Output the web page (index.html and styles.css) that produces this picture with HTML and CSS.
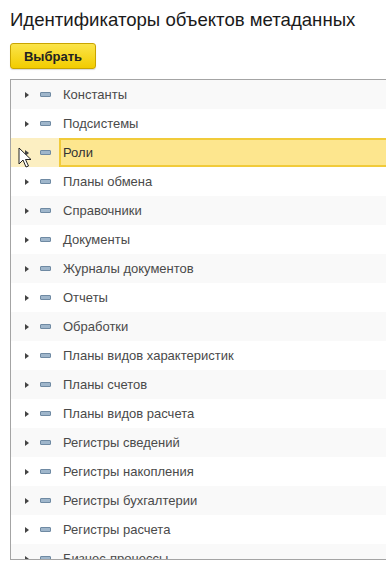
FILE: index.html
```html
<!DOCTYPE html>
<html lang="ru">
<head>
    <meta charset="UTF-8">
    <meta name="viewport" content="width=device-width, initial-scale=1.0">
    <title>Идентификаторы объектов метаданных</title>
    <link rel="stylesheet" href="styles.css">
</head>
<body>
    <div class="form">
        <h1 class="form-title">Идентификаторы объектов метаданных</h1>
        <div class="toolbar">
            <button type="button" class="btn-select">Выбрать</button>
        </div>
        <div class="tree">
            <div class="row"><span class="arrow"></span><span class="mark"></span><span class="cell">Константы</span></div>
            <div class="row"><span class="arrow"></span><span class="mark"></span><span class="cell">Подсистемы</span></div>
            <div class="row selected"><span class="arrow"></span><span class="mark"></span><span class="cell">Роли</span></div>
            <div class="row"><span class="arrow"></span><span class="mark"></span><span class="cell">Планы обмена</span></div>
            <div class="row"><span class="arrow"></span><span class="mark"></span><span class="cell">Справочники</span></div>
            <div class="row"><span class="arrow"></span><span class="mark"></span><span class="cell">Документы</span></div>
            <div class="row"><span class="arrow"></span><span class="mark"></span><span class="cell">Журналы документов</span></div>
            <div class="row"><span class="arrow"></span><span class="mark"></span><span class="cell">Отчеты</span></div>
            <div class="row"><span class="arrow"></span><span class="mark"></span><span class="cell">Обработки</span></div>
            <div class="row"><span class="arrow"></span><span class="mark"></span><span class="cell">Планы видов характеристик</span></div>
            <div class="row"><span class="arrow"></span><span class="mark"></span><span class="cell">Планы счетов</span></div>
            <div class="row"><span class="arrow"></span><span class="mark"></span><span class="cell">Планы видов расчета</span></div>
            <div class="row"><span class="arrow"></span><span class="mark"></span><span class="cell">Регистры сведений</span></div>
            <div class="row"><span class="arrow"></span><span class="mark"></span><span class="cell">Регистры накопления</span></div>
            <div class="row"><span class="arrow"></span><span class="mark"></span><span class="cell">Регистры бухгалтерии</span></div>
            <div class="row"><span class="arrow"></span><span class="mark"></span><span class="cell">Регистры расчета</span></div>
            <div class="row"><span class="arrow"></span><span class="mark"></span><span class="cell">Бизнес-процессы</span></div>
        </div>
    </div>
    <!-- mouse pointer over the selected row -->
    <svg class="pointer" width="14" height="22" viewBox="0 0 14 22">
        <path d="M1 1 L1 17 L5 13 L8 20 L10.5 19 L7.5 12.5 L13 12.5 Z" fill="#fff" stroke="#222" stroke-width="1" stroke-linejoin="round"/>
    </svg>
</body>
</html>
```

FILE: styles.css
```css
body {
    margin: 0;
    padding: 0;
    background: #fff;
    color: #333;
    font-family: Arial, "Liberation Sans", sans-serif;
}
.form {
    padding: 8px 0 0 10px;
}
.form-title {
    margin: 0;
    font-size: 18.6px;
    font-weight: normal;
    line-height: 24px;
    color: #1a1a1a;
    white-space: nowrap;
}
.toolbar {
    margin-top: 11px;
    display: flex;
}
.btn-select {
    width: 86px;
    height: 26px;
    padding: 0;
    border: 1px solid #c9a400;
    border-radius: 3px;
    background: linear-gradient(#fbe44a, #f2cc00);
    box-shadow: 0 1px 1px rgba(0, 0, 0, 0.15);
    color: #222;
    font-family: inherit;
    font-size: 13px;
    font-weight: bold;
    cursor: pointer;
}
.tree {
    margin-top: 10px;
    height: 479px;
    overflow: hidden;
    border-top: 1px solid #a4a4a4;
    border-left: 1px solid #a4a4a4;
    border-bottom: 1px solid #a4a4a4;
}
.row {
    display: flex;
    align-items: center;
    height: 29px;
    font-size: 13px;
    color: #4a4a4a;
}
.row:nth-child(odd) {
    background: #f9f9f9;
}
.arrow {
    width: 0;
    height: 0;
    margin-left: 14px;
    border-top: 3.5px solid transparent;
    border-bottom: 3.5px solid transparent;
    border-left: 4px solid #444;
}
.mark {
    width: 9px;
    height: 3px;
    margin-left: 11px;
    border: 1px solid #6f8aa3;
    border-radius: 1px;
    background: #9fb6cb;
}
.cell {
    flex: 1;
    align-self: stretch;
    display: flex;
    align-items: center;
    margin-left: 10px;
    padding-left: 2px;
}
.row.selected {
    background: #fcefc2;
}
.row.selected .cell {
    margin-left: 8px;
    padding-left: 2px;
    background: #fde68e;
    border: 2px solid #f1cb3a;
    border-right: none;
    color: #333;
}
.pointer {
    position: absolute;
    left: 18px;
    top: 147px;
}
```
